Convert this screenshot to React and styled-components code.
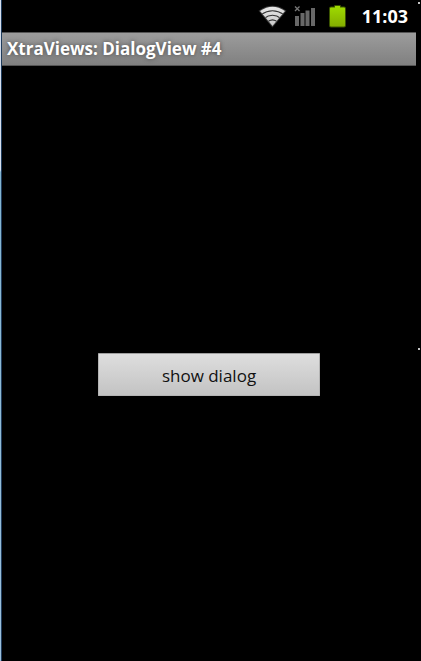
import { memo } from 'react';
import styled, { createGlobalStyle } from 'styled-components';

const GlobalStyle = createGlobalStyle`
    * {
        box-sizing: border-box;
    }

    body {
        margin: 0;
        background: #000;
        font-family: 'Open Sans', 'Noto Sans', sans-serif;
    }
`;

const Container = styled.div`
    position: relative;
    display: flex;
    min-height: 100vh;
    background: #000;
`;

const WindowEdge = styled.div`
    width: 2px;
    flex-shrink: 0;
    border-right: 1px solid #1f3c5c;
    background: linear-gradient(#d5dfee 0, #d5dfee 170px, #82b4d0 172px, #9cc0dc 100%);
`;

const Screen = styled.div`
    flex: 1;
    display: flex;
    flex-direction: column;
    margin-right: 5px;
`;

const StatusBar = styled.header`
    display: flex;
    align-items: center;
    justify-content: flex-end;
    height: 32px;
    padding-right: 8px;

    svg {
        display: block;
    }

    time {
        margin-left: 15px;
        color: #fff;
        font-size: 18px;
        font-weight: 700;
        line-height: 32px;
    }
`;

const TitleBar = styled.h1`
    height: 34px;
    margin: 0;
    padding-left: 5px;
    border-top: 1px solid #555;
    border-bottom: 1px solid #555;
    background: linear-gradient(#9c9c9c, #808080);
    color: #fff;
    font-size: 17px;
    font-weight: 700;
    line-height: 32px;
    text-shadow: 0 0 4px #444;
    white-space: nowrap;
`;

const Content = styled.main`
    flex: 1;
    display: flex;
    align-items: center;
    justify-content: center;
    padding-top: 22px;
`;

const DialogButton = styled.button`
    width: calc(54% - 1px);
    height: 43px;
    padding: 2px 0 0;
    border: 1px solid #b4b4b4;
    border-top-color: #9e9e9e;
    border-radius: 1px;
    background: linear-gradient(#dedede, #c3c3c3);
    color: #111;
    font-family: inherit;
    font-size: 17px;
    line-height: 39px;
`;

const Handle = styled.span`
    position: absolute;
    right: 1px;
    top: ${props => props.$top};
    width: 2px;
    height: 2px;
    background: #c4c4c4;
`;

function WifiIcon() {
    return (
        <svg width="36" height="32" viewBox="0 0 36 32" aria-label="Wi-Fi" role="img">
            <defs>
                <clipPath id="fan">
                    <path d="M17.5 26 L5 11 Q17.5 2.500 30 11 Z" />
                </clipPath>
                <linearGradient id="signal" x1="0" y1="6" x2="0" y2="27" gradientUnits="userSpaceOnUse">
                    <stop offset="0" stopColor="#e6e6e6" />
                    <stop offset="1" stopColor="#c8c8c8" />
                </linearGradient>
            </defs>
            <path d="M17.500 26 L5 11 Q17.500 2.500 30 11 Z" fill="none" stroke="#fff" strokeOpacity="0.2" strokeWidth="2" />
            <path d="M17.500 26 L5 11 Q17.500 2.500 30 11 Z" fill="url(#signal)" />
            <g clipPath="url(#fan)" fill="none" stroke="#333" strokeWidth="1.200">
                <path d="M6 14.500 Q17.500 7 29 14.500" />
                <path d="M9 18.500 Q17.500 12 26 18.500" />
                <path d="M12 22.300 Q17.500 17.500 23 22.300" />
            </g>
        </svg>
    );
}

function SignalIcon() {
    return (
        <svg width="36" height="32" viewBox="0 0 36 32" aria-label="No signal" role="img">
            <path d="M4 6.500 L8.500 11 M8.500 6.500 L4 11" stroke="#777" strokeWidth="1.300" />
            <g fill="#686868">
                <rect x="4" y="16" width="4" height="10" />
                <rect x="9.500" y="13" width="4" height="13" />
                <rect x="14.500" y="10.500" width="4" height="15.500" />
                <rect x="20" y="8" width="4" height="18" />
            </g>
        </svg>
    );
}

function BatteryIcon() {
    return (
        <svg width="20" height="32" viewBox="0 0 20 32" aria-label="Battery full" role="img">
            <defs>
                <linearGradient id="charge" x1="0" y1="0" x2="0" y2="1">
                    <stop offset="0" stopColor="#9fdc00" />
                    <stop offset="1" stopColor="#84ad00" />
                </linearGradient>
            </defs>
            <path
                d="M4 7.500 H8 V6 H13 V7.500 H17 Q18 7.500 18 8.500 V25.500 Q18 26.500 17 26.500 H4 Q3 26.500 3 25.500 V8.500 Q3 7.500 4 7.500 Z"
                fill="url(#charge)"
                stroke="#76a600"
                strokeOpacity="0.500"
                strokeWidth="2"
                strokeLinejoin="round"
                paintOrder="stroke"
            />
        </svg>
    );
}

function App() {
    return (
        <>
            <GlobalStyle />
            <Container>
                <WindowEdge />
                <Screen>
                    <StatusBar>
                        <WifiIcon />
                        <SignalIcon />
                        <BatteryIcon />
                        <time>11:03</time>
                    </StatusBar>
                    <TitleBar>XtraViews: DialogView #4</TitleBar>
                    <Content>
                        <DialogButton type="button">show dialog</DialogButton>
                    </Content>
                </Screen>
                <Handle $top="2px" />
                <Handle $top="348px" />
            </Container>
        </>
    );
}

export default memo(App);
